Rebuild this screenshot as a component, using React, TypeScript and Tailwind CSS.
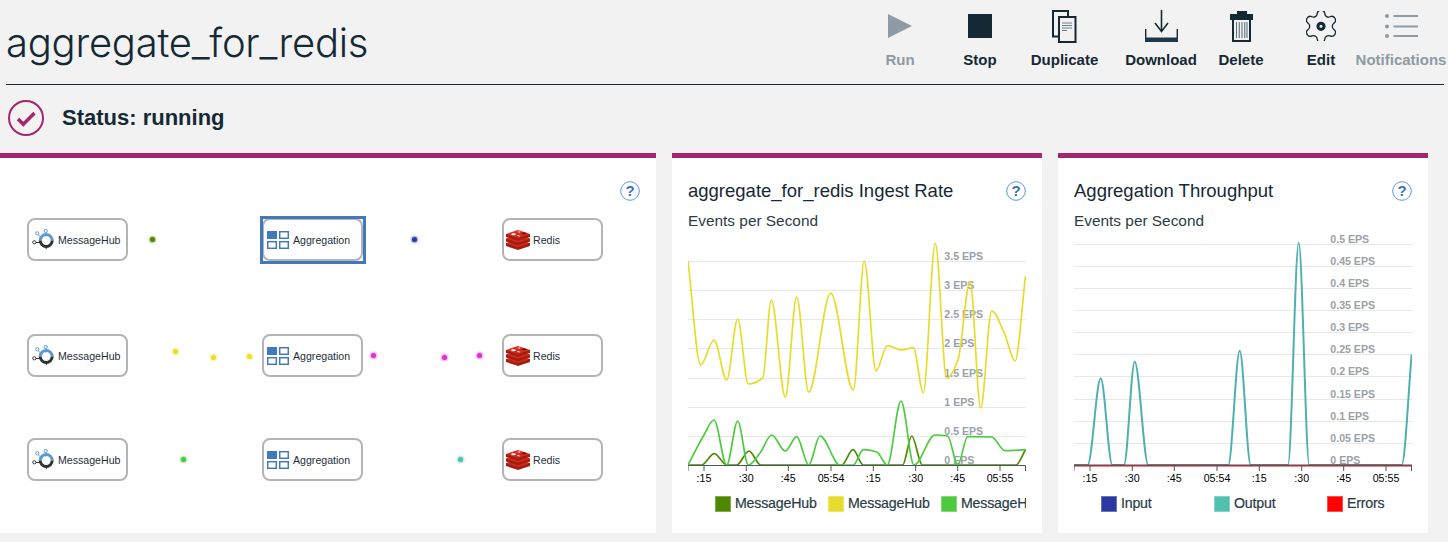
import type { ReactNode } from "react";

type Pt = [number, number];

// monotone-x interpolation, same idea as d3.curveMonotoneX
const smooth = (pts: Pt[]) => {
  const n = pts.length;
  const slopes: number[] = [];
  for (let i = 0; i < n - 1; i++) {
    slopes.push((pts[i + 1][1] - pts[i][1]) / (pts[i + 1][0] - pts[i][0]));
  }
  const tan: number[] = [slopes[0]];
  for (let i = 1; i < n - 1; i++) {
    tan.push(slopes[i - 1] * slopes[i] <= 0 ? 0 : (2 * slopes[i - 1] * slopes[i]) / (slopes[i - 1] + slopes[i]));
  }
  tan.push(slopes[n - 2]);
  let d = `M${pts[0][0]} ${pts[0][1]}`;
  for (let i = 0; i < n - 1; i++) {
    const dx = (pts[i + 1][0] - pts[i][0]) / 3;
    d += `C${pts[i][0] + dx} ${pts[i][1] + dx * tan[i]} ${pts[i + 1][0] - dx} ${pts[i + 1][1] - dx * tan[i + 1]} ${pts[i + 1][0]} ${pts[i + 1][1]}`;
  }
  return d;
};

const yellow: Pt[] = [
  [688, 261], [700.7, 365], [714, 340], [726.7, 380], [737.7, 319], [748.3, 384], [762.7, 378], [771.3, 300],
  [785.3, 397], [796.7, 297], [808.7, 392], [830.7, 293], [853.3, 390], [864.3, 261], [876, 371], [887.3, 345.7],
  [901, 350], [913.3, 347.7], [923.3, 392.7], [935.3, 243.3], [946.7, 378.3], [958, 360], [970, 281.7], [980.7, 408],
  [991.7, 311], [1005, 335], [1015, 361], [1025.5, 276],
];
const green: Pt[] = [
  [688, 465], [703, 436.7], [714, 420], [726.7, 465], [737.7, 421], [748.3, 465], [760, 453], [771.7, 435],
  [785.3, 451], [796.7, 436.7], [808.7, 465], [820, 436], [840, 465], [853.3, 465], [863.3, 449.7], [876.7, 452],
  [887.3, 465], [901, 401], [914, 465], [935, 435], [947.7, 436], [957.7, 465], [967.7, 436.7], [991.7, 437],
  [1005, 450.7], [1025.5, 449.7],
];
const darkGreen: Pt[] = [
  [688, 465], [701.7, 465], [714.3, 453.7], [726.7, 465], [736.7, 465], [749, 451], [760.7, 465], [841.7, 465],
  [853, 449.7], [863.3, 465], [902.7, 465], [911.7, 436], [922.3, 465], [1016, 465], [1025.5, 449.7],
];
const teal: Pt[] = [
  [1074, 465], [1087.7, 465], [1100.7, 378.3], [1112.3, 465], [1124, 465], [1134.7, 361.7], [1148.3, 465],
  [1228.3, 465], [1239.7, 350.7], [1250.7, 465], [1288, 465], [1298.7, 242.7], [1309.3, 465], [1401.7, 465],
  [1411.7, 354.3],
];

const ingestGrid: [number, string][] = [
  [261.5, "3.5 EPS"], [290.5, "3 EPS"], [319.5, "2.5 EPS"], [348.5, "2 EPS"],
  [378.5, "1.5 EPS"], [407.5, "1 EPS"], [436.5, "0.5 EPS"], [465.5, "0 EPS"],
];
const throughputGrid: [number, string][] = [
  [244.5, "0.5 EPS"], [266.5, "0.45 EPS"], [288.5, "0.4 EPS"], [310.5, "0.35 EPS"], [332.5, "0.3 EPS"],
  [354.5, "0.25 EPS"], [376.5, "0.2 EPS"], [399.5, "0.15 EPS"], [421.5, "0.1 EPS"], [443.5, "0.05 EPS"], [465.5, "0 EPS"],
];
const timeLabels = [":15", ":30", ":45", "05:54", ":15", ":30", ":45", "05:55"];

const Chart = ({ left, grid, children }: { left: number; grid: [number, string][]; children: ReactNode }) => {
  const ticks = [16, 58.3, 100.3, 143, 185.3, 227.7, 269.7, 312];
  return (
    <svg width="338" height="258" viewBox={`${left} 232 338 258`} className="mt-[1px] block overflow-hidden">
      {grid.map(([y]) => (
        <line key={y} x1={left} x2={left + 338} y1={y} y2={y} stroke="#e8e8e8" strokeWidth="1" />
      ))}
      {grid.map(([y, label]) => (
        <text key={label} x={left + 256.3} y={y - 2} className="fill-[#9aa1a8] text-[10.6px] font-bold">
          {label}
        </text>
      ))}
      {children}
      <path d={`M${left} 471V465.5H${left + 337.5}V471`} fill="none" stroke="#4a5660" strokeWidth="1" />
      {ticks.map((t, i) => (
        <g key={t}>
          <line x1={left + t} x2={left + t} y1={465} y2={471} stroke="#4a5660" strokeWidth="1" />
          <text x={left + t} y={482} textAnchor="middle" className="fill-black text-[10.7px]">
            {timeLabels[i]}
          </text>
        </g>
      ))}
    </svg>
  );
};

const Help = () => (
  <svg width="20" height="20" viewBox="0 0 20 20" className="shrink-0">
    <circle cx="10" cy="10" r="9.3" fill="none" stroke="#5596e6" strokeWidth="1" />
    <text x="10" y="15.300" textAnchor="middle" className="fill-[#3d70b2] text-[15px] font-bold">
      ?
    </text>
  </svg>
);

const LegendItem = ({ color, label, className }: { color: string; label: string; className: string }) => (
  <div className={`flex shrink-0 items-center gap-[4px] ${className}`}>
    <span className="h-[16px] w-[16px] shrink-0 border border-white/30" style={{ backgroundColor: color }} />
    <span className="text-[14.2px] leading-[17px] tracking-[-0.2px] text-[#2b3c47] [-webkit-text-stroke:0.2px_#2b3c47]">{label}</span>
  </div>
);

const HubIcon = () => (
  <svg width="22" height="22" viewBox="0 0 22 22" className="shrink-0">
    <path d="M6 5.5l4 4M14 3.5v4" stroke="#5b9bd5" strokeWidth="1" fill="none" />
    <path d="M3.5 13.5h5" stroke="#333" strokeWidth="1" fill="none" />
    <circle cx="5.3" cy="4.3" r="1.6" fill="#fff" stroke="#5b9bd5" strokeWidth="1" />
    <circle cx="13.7" cy="2" r="1.6" fill="#fff" stroke="#5b9bd5" strokeWidth="1" />
    <circle cx="2.3" cy="13.3" r="1.6" fill="#fff" stroke="#333" strokeWidth="1" />
    <path d="M8.2 11.5a6 6 0 0 1 12 0" fill="none" stroke="#5b9bd5" strokeWidth="3" />
    <path d="M20.2 11.5a6 6 0 0 1-12 0" fill="none" stroke="#2f3437" strokeWidth="3" />
    <path d="M12.5 17h3.4l-1.7 3.5z" fill="#2f3437" />
  </svg>
);

const AggIcon = () => (
  <svg width="22" height="18" viewBox="0 0 22 18" className="shrink-0">
    <rect x="0" y="0" width="10" height="8" fill="#4178be" />
    <rect x="12.7" y="0.7" width="8.6" height="6.6" fill="#fff" stroke="#4178be" strokeWidth="1.5" />
    <rect x="0.7" y="10.7" width="8.6" height="6.6" fill="#fff" stroke="#4178be" strokeWidth="1.5" />
    <rect x="12.7" y="10.7" width="8.6" height="6.6" fill="#fff" stroke="#4178be" strokeWidth="1.5" />
  </svg>
);

const RedisIcon = () => (
  <svg width="24" height="20" viewBox="0 0 24 20" className="shrink-0">
    <path d="M0 13v3l12 4 12-4v-3z" fill="#a41e11" />
    <path d="M0 13l12-4 12 4-12 4z" fill="#d82c20" />
    <path d="M0 8.500v3l12 4 12-4v-3z" fill="#a41e11" />
    <path d="M0 8.500l12-4 12 4-12 4z" fill="#d82c20" />
    <path d="M0 4v3l12 4 12-4V4z" fill="#a41e11" />
    <path d="M0 4l12-4 12 4-12 4z" fill="#d82c20" />
    <ellipse cx="7.500" cy="4.300" rx="2.300" ry="1" fill="#fff" />
    <path d="M11 1.200l1.700.6 1.800-.6-.6 1.400-1.200-.2z" fill="#fff" />
    <path d="M10.500 5.800l2.500-.8 1 1.500z" fill="#fff" />
    <path d="M15 3.200l3.500-1 2.700 1.100-3.300 1.200z" fill="#7a0c00" />
  </svg>
);

const FlowNode = ({ icon, label, className, selected }: { icon: ReactNode; label: string; className: string; selected?: boolean }) => (
  <div className={`absolute flex h-[43px] w-[101px] items-center rounded-[8px] border-2 border-[#b4b4b4] bg-white ${className}`}>
    {selected && <span className="absolute -top-[4px] -left-[4px] h-[48px] w-[106px] border-[3px] border-[#4178be]" />}
    {icon}
    <span className="ml-[1px] pt-[1px] text-[10.6px] leading-none text-[#1d2f3b]">{label}</span>
  </div>
);

const Dot = ({ className }: { className: string }) => <span className={`absolute h-[5px] w-[5px] rounded-full ${className}`} />;

const ToolButton = ({ label, icon, className, dim }: { label: string; icon: ReactNode; className: string; dim?: boolean }) => (
  <button className={`flex flex-col items-center whitespace-nowrap ${className}`}>
    <span className="flex h-[38px] items-center">{icon}</span>
    <span className={`mt-[5px] text-[15px] leading-[20px] font-bold ${dim ? "text-[#8c9ba5]" : "text-[#152935]"}`}>{label}</span>
  </button>
);

const Card = ({ children, className }: { children: ReactNode; className: string }) => (
  <section className={`relative h-[380px] border-t-[5px] border-[#a6266e] bg-white ${className}`}>{children}</section>
);

const ChartHead = ({ title }: { title: string }) => (
  <>
    <div className="flex items-center justify-between pt-[21px]">
      <h2 className="text-[18.5px] leading-[24px] text-[#152935]">{title}</h2>
      <Help />
    </div>
    <p className="mt-[8px] text-[15.4px] leading-[20px] text-[#2b3c47]">Events per Second</p>
  </>
);

export default function App() {
  return (
    <div className="h-[542px] w-[1448px] overflow-hidden bg-[#f2f2f2] font-['Liberation_Sans',Arial,sans-serif]">
      <header className="mr-[4px] ml-[6px] flex h-[85px] justify-between border-b border-[#152935]">
        <h1 className="pt-[16px] font-['Inter',sans-serif] text-[40px] leading-[54px] font-light tracking-[-0.25px] text-[#152935]">aggregate_for_redis</h1>
        <div className="-mr-[2px] flex pt-[7px]">
          <ToolButton
            label="Run"
            dim
            className="w-[80px]"
            icon={
              <svg width="24" height="24" viewBox="0 0 24 24">
                <path d="M0 0l24 12L0 24z" fill="#8c9ba5" />
              </svg>
            }
          />
          <ToolButton
            label="Stop"
            className="w-[80px]"
            icon={<span className="block h-[24px] w-[24px] bg-[#152935]" />}
          />
          <ToolButton
            label="Duplicate"
            className="w-[89px]"
            icon={
              <svg width="25" height="33" viewBox="0 0 25 33">
                <path d="M6 26.500H1V1h15v6" fill="none" stroke="#152935" strokeWidth="2" />
                <path d="M7 7h16.500v25H7z" fill="#f2f2f2" stroke="#152935" strokeWidth="2" />
                <path d="M10 13h10M10 15.500h10M10 18h10M10 20.500h5" stroke="#6d7f8b" strokeWidth="1.200" />
              </svg>
            }
          />
          <ToolButton
            label="Download"
            className="w-[104px]"
            icon={
              <svg width="33" height="32" viewBox="0 0 33 32">
                <path d="M16.500 0v21.500M10 13l6.500 8.500L23 13" fill="none" stroke="#152935" strokeWidth="1.600" />
                <path d="M.7 19v9M32.300 19v9" stroke="#152935" strokeWidth="1.400" />
                <rect x="0" y="27.500" width="33" height="4.500" fill="#1d3649" />
              </svg>
            }
          />
          <ToolButton
            label="Delete"
            className="w-[56px]"
            icon={
              <svg width="23" height="31" viewBox="0 0 23 31">
                <path d="M7 3V0h10v3z" fill="#152935" />
                <rect x="0" y="3" width="23" height="6" fill="#152935" />
                <path d="M2 9h19v22H2z" fill="#f2f2f2" />
                <path d="M3 9v21h17V9" fill="none" stroke="#152935" strokeWidth="2" />
                <path d="M6.500 11v16M9.250 11v16M12 11v16M14.750 11v16M17 11v16" stroke="#5d6f7b" strokeWidth="1.100" />
              </svg>
            }
          />
          <ToolButton
            label="Edit"
            className="ml-[27px] w-[50px]"
            icon={
              <svg width="30" height="30" viewBox="3 2.500 18 18.600">
                <path
                  d="M9.671 4.136a2.34 2.34 0 0 1 4.659 0 2.34 2.34 0 0 0 3.319 1.915 2.34 2.34 0 0 1 2.33 4.033 2.34 2.34 0 0 0 0 3.831 2.34 2.34 0 0 1-2.33 4.033 2.34 2.34 0 0 0-3.319 1.915 2.34 2.34 0 0 1-4.659 0 2.34 2.34 0 0 0-3.32-1.915 2.34 2.34 0 0 1-2.33-4.033 2.34 2.34 0 0 0 0-3.831A2.34 2.34 0 0 1 6.35 6.051a2.34 2.34 0 0 0 3.319-1.915"
                  fill="none"
                  stroke="#152935"
                  strokeWidth="0.800"
                />
                <circle cx="12" cy="12" r="1.900" fill="none" stroke="#152935" strokeWidth="1.900" />
              </svg>
            }
          />
          <ToolButton
            label="Notifications"
            dim
            className="ml-[10px] w-[90px]"
            icon={
              <svg width="33" height="24" viewBox="0 0 33 24">
                <circle cx="2" cy="2" r="2" fill="#8c9ba5" />
                <circle cx="2" cy="12.500" r="2" fill="#8c9ba5" />
                <circle cx="2" cy="22" r="2" fill="#8c9ba5" />
                <path d="M8.500 2H33M8.500 12.500H33M8.500 22H33" stroke="#8c9ba5" strokeWidth="1.800" />
              </svg>
            }
          />
        </div>
      </header>

      <div className="flex h-[68px] items-center gap-[18px] pb-[2px] pl-[8px]">
        <svg width="36" height="36" viewBox="0 0 36 36">
          <circle cx="18" cy="18" r="17" fill="none" stroke="#a6266e" strokeWidth="2" />
          <path d="M10 19l5.300 5.300L26.500 13" fill="none" stroke="#a6266e" strokeWidth="3.500" />
        </svg>
        <span className="text-[22px] leading-none font-bold text-[#152935]">Status: running</span>
      </div>

      <main className="flex gap-[16px]">
        <Card className="w-[656px]">
          <div className="flex justify-end pt-[23px] pr-[16px]">
            <Help />
          </div>
          <FlowNode icon={<span className="mr-[3px] ml-[3px]"><HubIcon /></span>} label="MessageHub" className="top-[60px] left-[27px]" />
          <FlowNode selected icon={<span className="mr-[3px] ml-[3px]"><AggIcon /></span>} label="Aggregation" className="top-[60px] left-[262px]" />
          <FlowNode icon={<span className="mr-[2px] ml-[2px]"><RedisIcon /></span>} label="Redis" className="top-[60px] left-[502px]" />
          <FlowNode icon={<span className="mr-[3px] ml-[3px]"><HubIcon /></span>} label="MessageHub" className="top-[176px] left-[27px]" />
          <FlowNode icon={<span className="mr-[3px] ml-[3px]"><AggIcon /></span>} label="Aggregation" className="top-[176px] left-[262px]" />
          <FlowNode icon={<span className="mr-[2px] ml-[2px]"><RedisIcon /></span>} label="Redis" className="top-[176px] left-[502px]" />
          <FlowNode icon={<span className="mr-[3px] ml-[3px]"><HubIcon /></span>} label="MessageHub" className="top-[280px] left-[27px]" />
          <FlowNode icon={<span className="mr-[3px] ml-[3px]"><AggIcon /></span>} label="Aggregation" className="top-[280px] left-[262px]" />
          <FlowNode icon={<span className="mr-[2px] ml-[2px]"><RedisIcon /></span>} label="Redis" className="top-[280px] left-[502px]" />

          <Dot className="top-[79px] left-[150px] bg-[#4f8800] shadow-[0_0_2px_1px_#4f880088]" />
          <Dot className="top-[79px] left-[412px] bg-[#2d3a9e] shadow-[0_0_2px_1px_#2d3a9e88]" />
          <Dot className="top-[191px] left-[173px] bg-[#e8e02a] shadow-[0_0_2px_1px_#e8e02a88]" />
          <Dot className="top-[197px] left-[211px] bg-[#e8e02a] shadow-[0_0_2px_1px_#e8e02a88]" />
          <Dot className="top-[196px] left-[247px] bg-[#e8e02a] shadow-[0_0_2px_1px_#e8e02a88]" />
          <Dot className="top-[195px] left-[371px] bg-[#e030d0] shadow-[0_0_2px_1px_#e030d088]" />
          <Dot className="top-[197px] left-[442px] bg-[#e030d0] shadow-[0_0_2px_1px_#e030d088]" />
          <Dot className="top-[195px] left-[477px] bg-[#e030d0] shadow-[0_0_2px_1px_#e030d088]" />
          <Dot className="top-[299px] left-[181px] bg-[#48c840] shadow-[0_0_2px_1px_#48c84088]" />
          <Dot className="top-[299px] left-[458px] bg-[#50c0b0] shadow-[0_0_2px_1px_#50c0b088]" />
        </Card>

        <Card className="w-[370px] px-[16px]">
          <ChartHead title="aggregate_for_redis Ingest Rate" />
          <Chart left={688} grid={ingestGrid}>
            <path d={smooth(yellow)} fill="none" stroke="#e8dc2a" strokeWidth="1.700" />
            <path d={smooth(darkGreen)} fill="none" stroke="#4f8800" strokeWidth="1.700" />
            <path d={smooth(green)} fill="none" stroke="#4ccb3f" strokeWidth="1.700" />
          </Chart>
          <div className="mt-[5px] flex overflow-hidden pl-[27px]">
            <LegendItem color="#4f8800" label="MessageHub" className="w-[113px]" />
            <LegendItem color="#e8dc2a" label="MessageHub" className="w-[113px]" />
            <LegendItem color="#4ccb3f" label="MessageHub" className="w-[113px]" />
          </div>
        </Card>

        <Card className="w-[370px] px-[16px]">
          <ChartHead title="Aggregation Throughput" />
          <Chart left={1074} grid={throughputGrid}>
            <path d={smooth(teal)} fill="none" stroke="#4fb0b2" strokeWidth="2" />
            <line x1={1074} x2={1412} y1={465.5} y2={465.5} stroke="#e8151b" strokeWidth="2" />
          </Chart>
          <div className="mt-[5px] flex pl-[27px]">
            <LegendItem color="#2a38a0" label="Input" className="w-[113px]" />
            <LegendItem color="#50c0b0" label="Output" className="w-[113px]" />
            <LegendItem color="#ff0000" label="Errors" className="w-[113px]" />
          </div>
        </Card>
      </main>
    </div>
  );
}
